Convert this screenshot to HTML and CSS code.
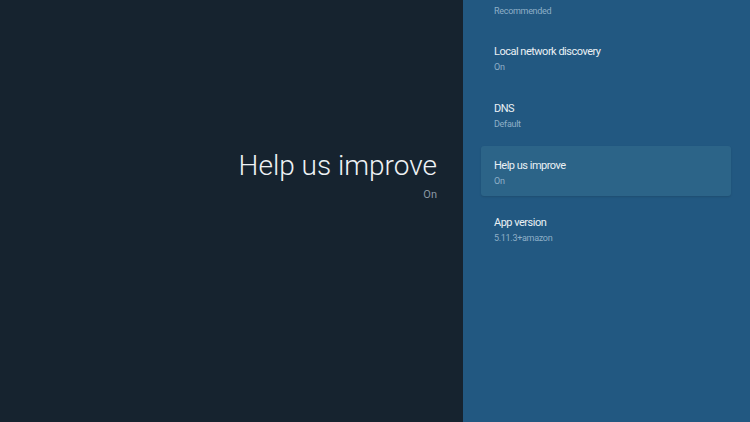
FILE: index.html
```html
<!DOCTYPE html>
<html lang="en">
<head>
    <meta charset="UTF-8">
    <title>Settings</title>
    <link rel="stylesheet" href="styles.css">
</head>
<body>

<div class="screen">
    <!-- Left side: current setting -->
    <div class="detail">
        <h1 class="detail-title">Help us improve</h1>
        <div class="detail-value">On</div>
    </div>

    <!-- Right side: settings list (scrolled, first item title is off screen) -->
    <div class="side-panel">
        <ul class="settings-list">
            <li class="setting scrolled-off">
                <div class="setting-value">Recommended</div>
            </li>
            <li class="setting">
                <div class="setting-name">Local network discovery</div>
                <div class="setting-value">On</div>
            </li>
            <li class="setting">
                <div class="setting-name">DNS</div>
                <div class="setting-value">Default</div>
            </li>
            <li class="setting focused">
                <div class="setting-name">Help us improve</div>
                <div class="setting-value">On</div>
            </li>
            <li class="setting">
                <div class="setting-name">App version</div>
                <div class="setting-value">5.11.3+amazon</div>
            </li>
        </ul>
    </div>
</div>

</body>
</html>
```

FILE: styles.css
```css
body {
    margin: 0;
    font-family: Roboto, "Noto Sans", sans-serif;
    background-color: #16232f;
    overflow: hidden;
}

.screen {
    display: flex;
    width: 750px;
    height: 422px;
}

/* Left detail area */
.detail {
    width: 463px;
    box-sizing: border-box;
    padding: 146px 26px 0 0;
    text-align: right;
    background-color: #16232f;
}

.detail-title {
    margin: 0;
    font-size: 28px;
    font-weight: 300;
    line-height: 40px;
    color: #eef2f5;
}

.detail-value {
    margin-top: 2px;
    font-size: 11px;
    color: #8a97a3;
}

/* Right settings panel */
.side-panel {
    width: 287px;
    background-color: #225881;
    overflow: hidden;
}

.settings-list {
    list-style: none;
    margin: -25px 0 0 0;
    padding: 0 19px 0 18px;
    display: flex;
    flex-direction: column;
    gap: 7px;
}

.setting {
    height: 50px;
    box-sizing: border-box;
    padding: 12px 13px 0;
    border-radius: 3px;
}

.setting.scrolled-off {
    padding-top: 29px;
}

.setting.focused {
    background-color: #2c6488;
    box-shadow: 0 1px 2px rgba(0, 0, 0, 0.12);
}

.setting-name {
    font-size: 11px;
    line-height: 16px;
    letter-spacing: -0.5px;
    color: #eaf0f4;
}

.setting-value {
    margin-top: 1px;
    font-size: 9px;
    line-height: 12px;
    letter-spacing: -0.3px;
    color: #8eafc7;
}
```
